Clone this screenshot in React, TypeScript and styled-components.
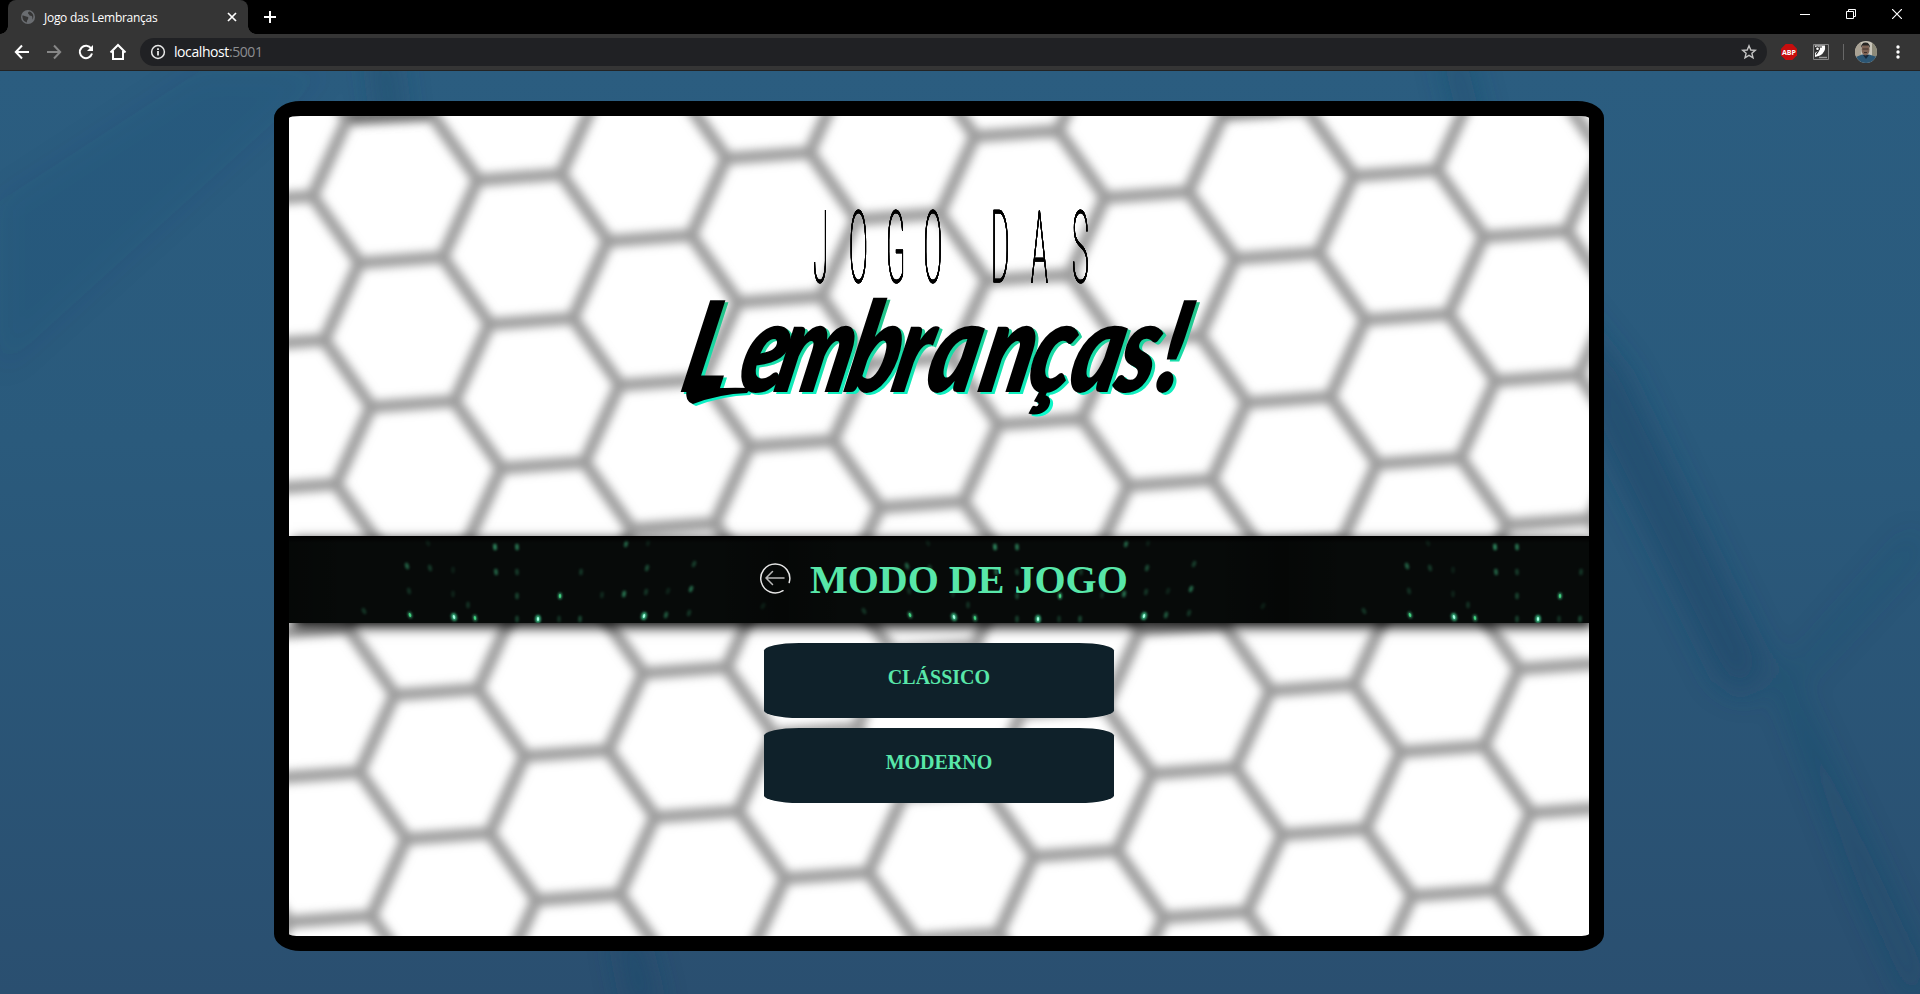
import React from "react";
import styled, { createGlobalStyle } from "styled-components";

const GlobalStyle = createGlobalStyle`
  * { box-sizing: border-box; }
  body {
    margin: 0;
    overflow: hidden;
    font-family: "Liberation Serif", "Times New Roman", serif;
  }
`;

const Browser = styled.div`
  display: flex;
  flex-direction: column;
  width: 1920px;
  height: 994px;
  overflow: hidden;
`;

const TabStrip = styled.div`
  display: flex;
  justify-content: space-between;
  height: 34px;
  background: #000;
`;

const TabGroup = styled.div`
  display: flex;
  align-items: stretch;
  padding-left: 8px;
`;

const Tab = styled.div`
  position: relative;
  display: flex;
  align-items: center;
  width: 240px;
  padding: 0 9px 0 13px;
  background: #353535;
  border-radius: 8px 8px 0 0;
  color: #fff;
  font: 12px "Open Sans", "Noto Sans", sans-serif;
  letter-spacing: -0.28px;
  &::before, &::after {
    content: "";
    position: absolute;
    bottom: 0;
    width: 8px;
    height: 8px;
  }
  &::before {
    left: -8px;
    background: radial-gradient(circle at 0 0, #000 7.5px, #353535 8px);
  }
  &::after {
    right: -8px;
    background: radial-gradient(circle at 100% 0, #000 7.5px, #353535 8px);
  }
`;

const TabTitle = styled.span`
  flex: 1;
  padding-left: 9px;
  white-space: nowrap;
`;

const NewTab = styled.div`
  display: flex;
  align-items: center;
  justify-content: center;
  width: 44px;
`;

const WindowControls = styled.div`
  display: flex;
  height: 28px;
`;

const WindowButton = styled.div`
  display: flex;
  align-items: center;
  justify-content: center;
  width: 46px;
`;

const Toolbar = styled.div`
  display: flex;
  align-items: center;
  height: 37px;
  padding: 0 7px 1px 6px;
  background: #353535;
  border-bottom: 1px solid #232323;
`;

const ToolButton = styled.div<{ $width?: number }>`
  display: flex;
  align-items: center;
  justify-content: center;
  width: ${(p) => p.$width ?? 32}px;
  height: 28px;
`;

const AddressBar = styled.div`
  display: flex;
  flex: 1;
  align-items: center;
  height: 28px;
  margin: 0 6px;
  padding: 0 10px;
  background: #202124;
  border-radius: 14px;
`;

const Address = styled.span`
  flex: 1;
  padding-left: 8px;
  color: #fff;
  font: 14px "Open Sans", "Noto Sans", sans-serif;
  letter-spacing: -0.42px;
`;

const Port = styled.span`
  color: #8c8e91;
`;

const Separator = styled.div`
  width: 1px;
  height: 16px;
  background: #686868;
`;

const Page = styled.main`
  position: relative;
  flex: 1;
  padding: 30px 0 0 274px;
  background: linear-gradient(180deg, #2b5d80 0%, #2a5a7c 40%, #2a4f70 100%);
`;

const Backdrop = styled.svg`
  position: absolute;
  inset: 0;
`;

const Card = styled.section`
  position: relative;
  width: 1330px;
  height: 850px;
  overflow: hidden;
  border: 15px solid #000;
  border-radius: 2%;
  background: #fff;
`;

const HexLayer = styled.svg`
  position: absolute;
  inset: 0;
`;

const Content = styled.div`
  position: relative;
  display: flex;
  flex-direction: column;
  align-items: center;
`;

const Logo = styled.svg`
  display: block;
  width: 1300px;
  height: 420px;
`;

const ThinLine = styled.g`
  filter: drop-shadow(0.7px 0 0 #000) drop-shadow(0.5px 0 0 #000);
`;

const Band = styled.header`
  position: relative;
  display: flex;
  align-items: center;
  width: 1300px;
  height: 87px;
  padding-left: 470px;
  background: #070a09;
  box-shadow: 4px 4px 12px #000;
`;

const Sparks = styled.svg`
  position: absolute;
  inset: 0;
`;

const BackButton = styled.div`
  position: relative;
  width: 32px;
  height: 32px;
  margin-bottom: 3px;
`;

const Title = styled.h1`
  position: relative;
  margin: 0 0 0 19px;
  color: #58e7a9;
  font-size: 40px;
  line-height: 46px;
  white-space: nowrap;
`;

const ModeList = styled.nav`
  display: flex;
  flex-direction: column;
  gap: 10px;
  margin-top: 20px;
`;

const ModeButton = styled.div`
  width: 350px;
  height: 75px;
  padding-top: 23px;
  border-radius: 10%;
  background: #0f212a;
  color: #58e7a9;
  font-size: 20px;
  font-weight: bold;
  line-height: 23px;
  text-align: center;
`;

/* Honeycomb: every cell corner at ORIGIN + i*RIGHT + j*DOWN has three edges. */
const ORIGIN = [23.5, 80];
const RIGHT = [118.4, -82.9];
const DOWN = [11.75, 144];
const EDGES = [[47, 66.5], [35.2, -77.5], [-83.5, 6]];

function honeycomb(): string {
  let d = "";
  for (let i = -2; i < 13; i++) {
    for (let j = -3; j < 16; j++) {
      const x = ORIGIN[0] + i * RIGHT[0] + j * DOWN[0];
      const y = ORIGIN[1] + i * RIGHT[1] + j * DOWN[1];
      if (x < -150 || x > 1450 || y < -150 || y > 970) continue;
      EDGES.forEach(([dx, dy]) => {
        d += `M${x.toFixed(1)} ${y.toFixed(1)}l${dx} ${dy}`;
      });
    }
  }
  return d;
}

/* x, y, brightness, tilt of each light inside one 500px tile */
const LIGHTS: [number, number, number, number][] = [
  [206, 11, 0.7, -6], [228, 11, 0.6, -4], [337, 8, 0.5, 14], [139, 7, 0.12, -20], [359, 7, 0.12, 10],
  [118, 30, 0.5, -18], [141, 32, 0.28, -16], [164, 34, 0.12, 0], [207, 36, 0.5, -8], [228, 36, 0.28, -6],
  [292, 36, 0.25, 6], [358, 32, 0.38, 16], [405, 28, 0.3, 24], [120, 55, 0.22, -14], [164, 58, 0.14, 0],
  [228, 60, 0.32, 0], [271, 60, 0.85, 0], [313, 59, 0.18, 8], [335, 58, 0.6, 12], [357, 56, 0.25, 14],
  [379, 55, 0.15, 20], [402, 53, 0.55, 22], [75, 75, 0.25, -28], [121, 79, 0.75, -20], [165, 81, 1.2, -14],
  [186, 82, 0.8, -10], [228, 83, 0.3, 0], [249, 83, 1.2, 0], [270, 83, 0.22, 0], [291, 83, 0.35, 4],
  [355, 80, 1.15, 14], [377, 79, 0.45, 16], [400, 77, 0.25, 18], [474, 70, 0.13, 30], [179, 69, 0.22, 0],
];

const JOGO_SCALE = 0.28;
const JOGO_X = [524, 560, 597, 634.5, 671, 702, 742, 783];
const LEMBRANCAS_X = [389, 446, 483, 553, 600, 634, 687, 735, 777, 823, 863];
const BRUSH_SCALE = 0.74;
const L_FOOT = "M398 272Q395 285 404 288Q430 278 458 277L462 272Q430 271 402 274Z";

function BrandLogo() {
  const brush = {
    fontFamily: "Lato",
    fontWeight: 800,
    fontStyle: "italic",
    fontSize: 126,
    x: LEMBRANCAS_X.map((v) => v / BRUSH_SCALE).join(" "),
    y: 0,
  };
  return (
    <Logo viewBox="0 0 1300 420">
      <defs>
        <linearGradient id="mint" gradientUnits="userSpaceOnUse" x1="0" y1="-96" x2="0" y2="28">
          <stop offset="0" stopColor="#27bd82" />
          <stop offset="1" stopColor="#08ffd2" />
        </linearGradient>
      </defs>
      <ThinLine>
        <g transform={`translate(0 165.5) scale(${JOGO_SCALE} 1)`}>
          <text
            x={JOGO_X.map((v) => v / JOGO_SCALE).join(" ")}
            y={0}
            fontFamily="Roboto"
            fontWeight={100}
            fontSize={101}
            stroke="#000"
            strokeWidth={1}
          >
            JOGO DAS
          </text>
        </g>
      </ThinLine>
      <path d={L_FOOT} transform="translate(3 2)" fill="#0cefc4" />
      <g transform={`translate(3 278) skewX(-13) scale(${BRUSH_SCALE} 1)`}>
        <text {...brush} fill="url(#mint)">Lembranças!</text>
      </g>
      <path d={L_FOOT} />
      <g transform={`translate(0 276) skewX(-13) scale(${BRUSH_SCALE} 1)`}>
        <text {...brush}>Lembranças!</text>
      </g>
    </Logo>
  );
}

function PageBackdrop() {
  return (
    <Backdrop width="1920" height="923">
      <filter id="haze" x="-50%" y="-50%" width="200%" height="200%">
        <feGaussianBlur stdDeviation="14" />
      </filter>
      <g fill="#1d4a6a" filter="url(#haze)">
        <path d="M1570 230L1625 300L1765 590L1750 625L1720 610L1590 350Z" opacity=".6" />
        <path d="M1765 580L1785 600L1925 900L1915 940L1860 820Z" opacity=".4" />
        <path d="M370 -20H395L405 60H380Z" opacity=".5" />
        <path d="M1440 -20H1465L1485 60H1460Z" opacity=".4" />
        <path d="M615 860H640L660 940H630Z" opacity=".6" />
        <path d="M1920 480L1800 610L1790 600L1915 460Z" opacity=".2" />
        <path d="M0 130L200 0H330L0 300Z" opacity=".08" />
      </g>
    </Backdrop>
  );
}

export default function App() {
  return (
    <Browser>
      <GlobalStyle />
      <TabStrip>
        <TabGroup>
          <Tab>
            <svg width="14" height="14" viewBox="0 0 14 14">
              <circle cx="7" cy="7" r="7" fill="#6a6d71" />
              <path d="M1.4 5.6C3 5 3.8 6.3 5.3 6.5S7.7 7 7.2 8.4 5.8 10 5.9 12.4C3 12 1.2 9.3 1.4 5.6ZM8.2 1.5C7 2.1 6.5 3.2 7.5 4S8.4 5.8 9.8 5.8 11.6 7.2 11.3 9.8C13.2 7 12.7 2.7 8.2 1.5Z" fill="#353535" />
            </svg>
            <TabTitle>Jogo das Lembranças</TabTitle>
            <svg width="14" height="14" viewBox="0 0 14 14" stroke="#fff" strokeWidth="1.7">
              <path d="M3 3L11 11M11 3L3 11" />
            </svg>
          </Tab>
          <NewTab>
            <svg width="12" height="12" viewBox="0 0 12 12" stroke="#fff" strokeWidth="2">
              <path d="M6 0V12M0 6H12" />
            </svg>
          </NewTab>
        </TabGroup>
        <WindowControls>
          <WindowButton>
            <svg width="10" height="10"><path d="M0 5.5H10" stroke="#fff" /></svg>
          </WindowButton>
          <WindowButton>
            <svg width="10" height="10" fill="none" stroke="#fff">
              <path d="M.5 2.5H7.5V9.5H.5ZM2.5 2.5V.5H9.5V7.5H7.5" />
            </svg>
          </WindowButton>
          <WindowButton>
            <svg width="10" height="10" stroke="#fff" strokeWidth="1.2"><path d="M0 0L10 10M10 0L0 10" /></svg>
          </WindowButton>
        </WindowControls>
      </TabStrip>

      <Toolbar>
        <ToolButton>
          <svg width="16" height="16" fill="none" stroke="#fff" strokeWidth="2"><path d="M15 8H2M8 1.5L1.8 8L8 14.5" /></svg>
        </ToolButton>
        <ToolButton>
          <svg width="16" height="16" fill="none" stroke="#878787" strokeWidth="2"><path d="M1 8H14M8 1.5L14.2 8L8 14.5" /></svg>
        </ToolButton>
        <ToolButton>
          <svg width="16" height="16" fill="none" stroke="#fff" strokeWidth="2">
            <path d="M13.2 4.5A6.2 6.2 0 1 0 14 9.6" />
            <path d="M15 1V7H9Z" fill="#fff" stroke="none" />
          </svg>
        </ToolButton>
        <ToolButton>
          <svg width="18" height="18" fill="none" stroke="#fff" strokeWidth="2"><path d="M1.5 9.5L9 2L16.5 9.5M4 8V16H14V8" /></svg>
        </ToolButton>
        <AddressBar>
          <svg width="16" height="16" fill="none" stroke="#e8e8e8" strokeWidth="1.5">
            <circle cx="8" cy="8" r="6.4" />
            <path d="M8 7V11.5M8 4.3V5.9" strokeWidth="1.8" />
          </svg>
          <Address>localhost<Port>:5001</Port></Address>
          <svg width="16" height="16" fill="none" stroke="#c4c4c4" strokeWidth="1.4">
            <path d="M8 1.8L9.8 6L14.3 6.4L10.9 9.3L12 13.8L8 11.4L4 13.8L5.1 9.3L1.7 6.4L6.2 6Z" />
          </svg>
        </AddressBar>
        <ToolButton>
          <svg width="16" height="16" viewBox="0 0 16 16">
            <path d="M4.7 0H11.3L16 4.7V11.3L11.3 16H4.7L0 11.3V4.7Z" fill="#c70d0d" />
            <text x="8" y="10.8" fill="#fff" fontFamily="Open Sans" fontSize="7.8" fontWeight="700" textAnchor="middle" textLength="14" lengthAdjust="spacingAndGlyphs">ABP</text>
          </svg>
        </ToolButton>
        <ToolButton>
          <svg width="16" height="16">
            <path d="M.5 .5H15.5V15.5H.5Z" fill="#353535" stroke="#858585" />
            <path d="M1.5 1.5H12Q13 8 7 11.5L2 13V9L5 7Z" fill="#fff" />
            <circle cx="4.5" cy="4.8" r="1.9" fill="#fff" stroke="#222" strokeWidth="1.2" />
            <path d="M6 3H9M5.5 7L3 10.5" stroke="#222" strokeWidth="1.2" />
            <path d="M6 13.5H14" stroke="#999" strokeWidth="1.4" />
          </svg>
        </ToolButton>
        <ToolButton $width={12}><Separator /></ToolButton>
        <ToolButton $width={34}>
          <svg width="22" height="22">
            <clipPath id="face"><circle cx="11" cy="11" r="11" /></clipPath>
            <g clipPath="url(#face)">
              <rect width="22" height="22" fill="#c9c5b9" />
              <rect width="6" height="22" fill="#a9a294" />
              <rect x="17" width="5" height="22" fill="#8d8a79" />
              <path d="M1 22V16L7 13.5H14L22 16V22Z" fill="#2c5674" />
              <path d="M8 14L11 18L14 14Z" fill="#14283c" />
              <ellipse cx="10.5" cy="8.5" rx="4" ry="6" fill="#7d6254" />
              <path d="M6 7Q6 1.5 10.5 1.5T15 7L13.5 4.5H7.5Z" fill="#282624" />
              <path d="M7.5 8H13.5M9 11.5H12" stroke="#3d302b" />
            </g>
          </svg>
        </ToolButton>
        <ToolButton $width={30}>
          <svg width="4" height="14" fill="#fff">
            <circle cx="2" cy="2" r="1.7" /><circle cx="2" cy="7" r="1.7" /><circle cx="2" cy="12" r="1.7" />
          </svg>
        </ToolButton>
      </Toolbar>

      <Page>
        <PageBackdrop />
        <Card>
          <HexLayer width="1300" height="820">
            <filter id="soft" filterUnits="userSpaceOnUse" x="-40" y="-40" width="1380" height="900">
              <feGaussianBlur stdDeviation="4.7" />
            </filter>
            <g filter="url(#soft)">
              <path d={honeycomb()} fill="none" stroke="#9c9c9c" strokeWidth="12.5" strokeLinecap="round" />
              <path d="M57 -8H142V5L62 9Z" fill="#707070" />
              <path d="M930 -8H990V1L935 4Z" fill="#808080" />
            </g>
          </HexLayer>
          <Content>
            <BrandLogo />
            <Band>
              <Sparks width="1300" height="87">
                <defs>
                  <linearGradient id="seam">
                    <stop offset="0" stopColor="#000" stopOpacity=".25" />
                    <stop offset=".12" stopColor="#000" stopOpacity="0" />
                    <stop offset=".85" stopColor="#000" stopOpacity="0" />
                    <stop offset="1" stopColor="#000" stopOpacity=".35" />
                  </linearGradient>
                  <linearGradient id="brim" x2="0" y2="1">
                    <stop offset="0" stopColor="#000" />
                    <stop offset=".08" stopColor="#000" stopOpacity="0" />
                  </linearGradient>
                  <filter id="glow" x="-150%" y="-150%" width="400%" height="400%">
                    <feGaussianBlur stdDeviation="1" />
                  </filter>
                </defs>
                {[0, 500, 1000].map((left) => (
                  <g key={left} transform={`translate(${left} 0)`}>
                    <rect width="500" height="87" fill="url(#seam)" />
                    {LIGHTS.map(([x, y, b, tilt]) => (
                      <g key={`${x}-${y}`} transform={`translate(${x} ${y}) rotate(${tilt})`}>
                        <ellipse rx={b > 1 ? 2.7 : 2} ry={b > 1 ? 4 : 3.4} fill={b > 1 ? "#39b981" : "#3aa874"} opacity={Math.min(b, 1)} filter="url(#glow)" />
                        {b > 0.7 && <ellipse rx="1.2" ry="2" fill={b > 1 ? "#a4fbe0" : "#3fcf7c"} />}
                      </g>
                    ))}
                  </g>
                ))}
                <rect width="1300" height="87" fill="url(#brim)" />
              </Sparks>
              <BackButton>
                <svg width="32" height="32" fill="none" stroke="#e6e6e6" strokeWidth="1.5" strokeLinecap="round">
                  <path d="M30.2 20.5A14.5 14.5 0 1 0 24 28.7" />
                  <path d="M25 16H7M13.5 9.5L7 16L13.5 22.5" stroke="#b9b9b9" />
                </svg>
              </BackButton>
              <Title>MODO DE JOGO</Title>
            </Band>
            <ModeList>
              <ModeButton>CLÁSSICO</ModeButton>
              <ModeButton>MODERNO</ModeButton>
            </ModeList>
          </Content>
        </Card>
      </Page>
    </Browser>
  );
}
